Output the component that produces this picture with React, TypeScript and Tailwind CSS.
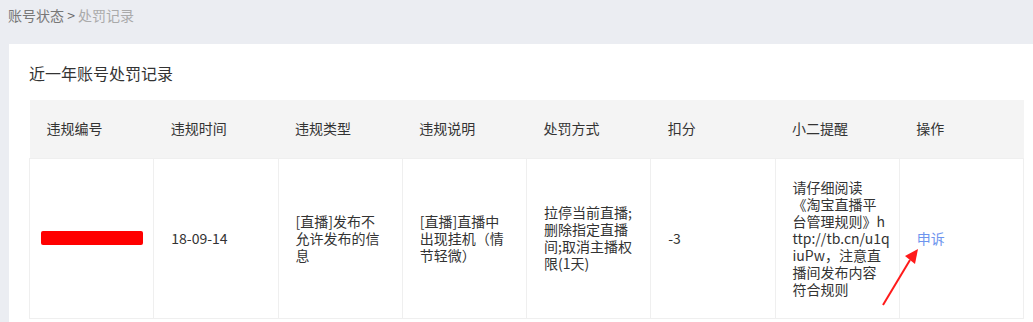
const headers = ["违规编号", "违规时间", "违规类型", "违规说明", "处罚方式", "扣分", "小二提醒", "操作"];

function Lines({ lines }: { lines: string[] }) {
  return (
    <div className="whitespace-nowrap">
      {lines.map((l) => (
        <div key={l}>{l}</div>
      ))}
    </div>
  );
}

export default function App() {
  return (
    <div
      className="relative w-[1033px] h-[322px] overflow-hidden bg-[#ebedf2] text-[#333]"
      style={{ fontFamily: '"Microsoft YaHei", "Noto Sans CJK SC", "Noto Sans", sans-serif' }}
    >
      <div className="h-[30px] pl-[8px] text-[14px] leading-[30px]">
        <span className="text-[#777]">账号状态</span>
        <span className="text-[#666]"> &gt; </span>
        <span className="text-[#aaa]">处罚记录</span>
      </div>

      <div className="ml-[9px] mt-[14px] w-[1035px] bg-white px-5 pt-[17px] pb-10">
        <h2 className="text-[16px] leading-[24px] mb-[15px]">近一年账号处罚记录</h2>
        <table className="w-[995px] table-fixed border-collapse text-[14px]">
          <thead>
            <tr className="bg-[#f4f4f4] h-[58px]">
              {headers.map((h) => (
                <th key={h} className="pl-[17px] pr-[16px] text-left font-normal">
                  {h}
                </th>
              ))}
            </tr>
          </thead>
          <tbody>
            <tr className="h-[160px] leading-[17px]">
              <td className="border border-[#efefef] pl-[17px] pr-[16px] align-middle">
                <div className="-ml-[6px] h-[14px] w-[102px] rounded-[2px] bg-[#ff0000]" />
              </td>
              <td className="border border-[#efefef] pl-[17px] pr-[16px]">18-09-14</td>
              <td className="border border-[#efefef] pl-[17px] pr-[16px]">
                <Lines lines={["[直播]发布不", "允许发布的信", "息"]} />
              </td>
              <td className="border border-[#efefef] pl-[17px] pr-[16px]">
                <Lines lines={["[直播]直播中", "出现挂机（情", "节轻微）"]} />
              </td>
              <td className="border border-[#efefef] pl-[17px] pr-[16px]">
                <Lines lines={["拉停当前直播;", "删除指定直播", "间;取消主播权", "限(1天)"]} />
              </td>
              <td className="border border-[#efefef] pl-[17px] pr-[16px]">-3</td>
              <td className="border border-[#efefef] pl-[17px] pr-[16px] py-5">
                <Lines
                  lines={[
                    "请仔细阅读",
                    "《淘宝直播平",
                    "台管理规则》h",
                    "ttp://tb.cn/u1q",
                    "iuPw，注意直",
                    "播间发布内容",
                    "符合规则",
                  ]}
                />
              </td>
              <td className="border border-[#efefef] pl-[17px] pr-[16px]">
                <a className="text-[#6d94ee] cursor-pointer">申诉</a>
              </td>
            </tr>
          </tbody>
        </table>
      </div>

      <svg className="absolute left-0 top-0 pointer-events-none" width="1033" height="322">
        <line x1="883" y1="305" x2="910" y2="260" stroke="#ff1a1a" strokeWidth="2" />
        <polygon points="918,249 905,256 915,264" fill="#ff1a1a" />
      </svg>
    </div>
  );
}
